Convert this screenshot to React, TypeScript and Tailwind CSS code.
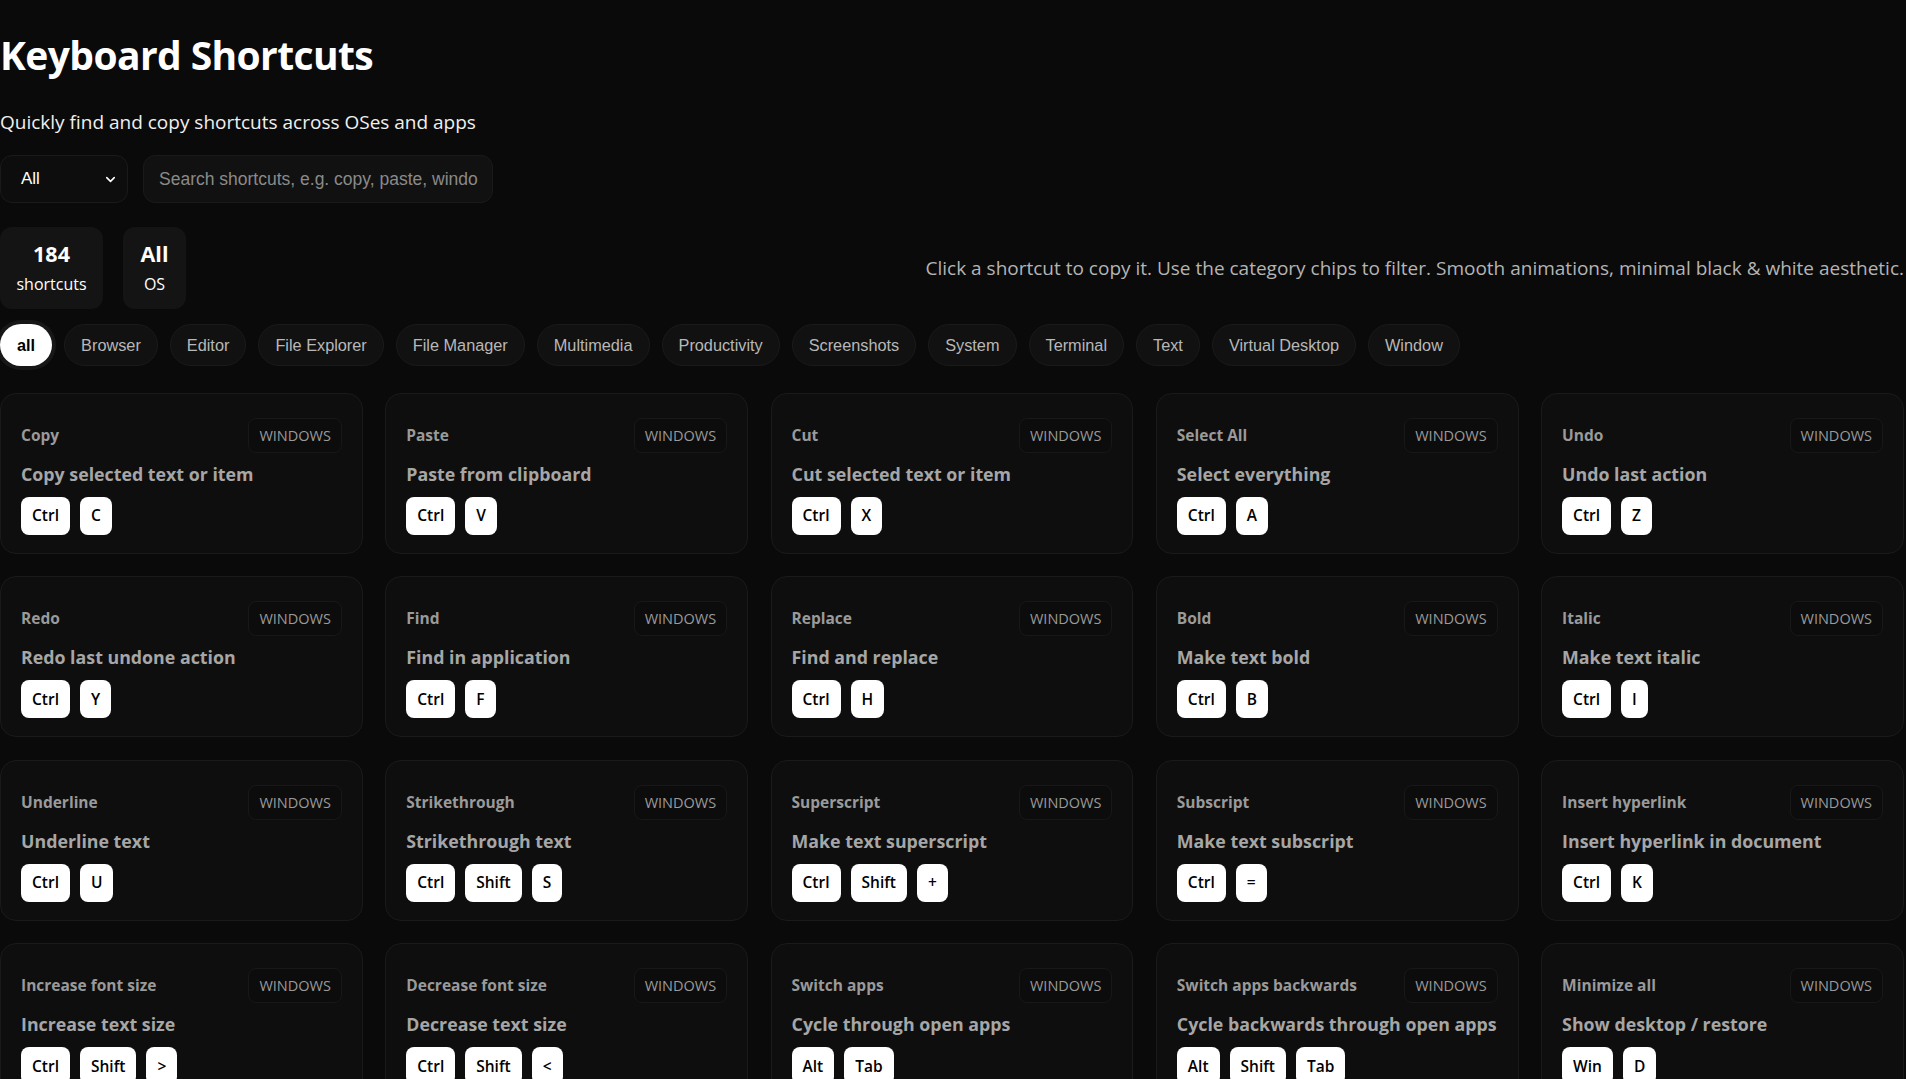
import { ChevronDown } from "lucide-react";

const categories = [
  "Browser",
  "Editor",
  "File Explorer",
  "File Manager",
  "Multimedia",
  "Productivity",
  "Screenshots",
  "System",
  "Terminal",
  "Text",
  "Virtual Desktop",
  "Window",
];

const shortcuts = [
  { title: "Copy", desc: "Copy selected text or item", keys: ["Ctrl", "C"] },
  { title: "Paste", desc: "Paste from clipboard", keys: ["Ctrl", "V"] },
  { title: "Cut", desc: "Cut selected text or item", keys: ["Ctrl", "X"] },
  { title: "Select All", desc: "Select everything", keys: ["Ctrl", "A"] },
  { title: "Undo", desc: "Undo last action", keys: ["Ctrl", "Z"] },
  { title: "Redo", desc: "Redo last undone action", keys: ["Ctrl", "Y"] },
  { title: "Find", desc: "Find in application", keys: ["Ctrl", "F"] },
  { title: "Replace", desc: "Find and replace", keys: ["Ctrl", "H"] },
  { title: "Bold", desc: "Make text bold", keys: ["Ctrl", "B"] },
  { title: "Italic", desc: "Make text italic", keys: ["Ctrl", "I"] },
  { title: "Underline", desc: "Underline text", keys: ["Ctrl", "U"] },
  { title: "Strikethrough", desc: "Strikethrough text", keys: ["Ctrl", "Shift", "S"] },
  { title: "Superscript", desc: "Make text superscript", keys: ["Ctrl", "Shift", "+"] },
  { title: "Subscript", desc: "Make text subscript", keys: ["Ctrl", "="] },
  { title: "Insert hyperlink", desc: "Insert hyperlink in document", keys: ["Ctrl", "K"] },
  { title: "Increase font size", desc: "Increase text size", keys: ["Ctrl", "Shift", ">"] },
  { title: "Decrease font size", desc: "Decrease text size", keys: ["Ctrl", "Shift", "<"] },
  { title: "Switch apps", desc: "Cycle through open apps", keys: ["Alt", "Tab"] },
  { title: "Switch apps backwards", desc: "Cycle backwards through open apps", keys: ["Alt", "Shift", "Tab"] },
  { title: "Minimize all", desc: "Show desktop / restore", keys: ["Win", "D"] },
];

function ShortcutCard({ s }: { s: (typeof shortcuts)[number] }) {
  return (
    <div className="rounded-2xl border border-[#1a1a1a] bg-[#0e0e0e] px-[20px] pt-[24px] pb-[18px]">
      {/* header */}
      <div className="flex items-center justify-between">
        <span className="text-[15.5px] font-bold text-[#9a9a9a]">{s.title}</span>
        <span className="rounded-lg border border-[#181818] bg-[#0c0c0c] px-[10px] py-[6px] text-[14.5px] leading-[21px] text-[#9a9a9a]">
          WINDOWS
        </span>
      </div>
      <div className="mt-[8px] whitespace-nowrap text-[17.8px] font-bold leading-[26px] text-[#a6a6a6]">
        {s.desc}
      </div>
      {/* keys */}
      <div className="mt-[10px] flex gap-[10px]">
        {s.keys.map((k, i) => (
          <kbd
            key={i}
            className="flex h-[38px] items-center rounded-lg bg-white px-[11px] text-[15.5px] font-semibold text-black"
            style={{ fontFamily: "inherit" }}
          >
            {k}
          </kbd>
        ))}
      </div>
    </div>
  );
}

export default function App() {
  return (
    <div
      className="min-h-screen w-full bg-[#0a0a0a] text-white"
      style={{ fontFamily: '"Open Sans", "Noto Sans", sans-serif' }}
    >
      <div className="w-[1904px]">
        {/* Header */}
        <h1 className="pt-[27px] text-[39px] font-bold leading-[56px] tracking-[-0.6px]">Keyboard Shortcuts</h1>
        <p className="mt-[26px] text-[19px] leading-[26px] text-[#f0f0f0]">
          Quickly find and copy shortcuts across OSes and apps
        </p>

        {/* Controls */}
        <div className="mt-[20px] flex gap-[15px] font-['Liberation_Sans',Arial,sans-serif]">
          <div className="flex h-[48px] w-[128px] items-center justify-between rounded-xl border border-[#1a1a1a] bg-[#0d0d0d] pl-[20px] pr-[9px] text-[17px] text-white">
            <span>All</span>
            <ChevronDown size={15} strokeWidth={2.5} />
          </div>
          <div className="flex h-[48px] w-[350px] items-center rounded-xl border border-[#1a1a1a] bg-[#111111] pl-[15px] text-[17.5px] text-[#8a8a8a]">
            Search shortcuts, e.g. copy, paste, windo
          </div>
        </div>

        {/* Stats + hint */}
        <div className="mt-[24px] flex items-center justify-between">
          <div className="flex gap-[20px]">
            <div className="flex h-[82px] w-[103px] flex-col items-center justify-center rounded-xl bg-[#141414]">
              <span className="text-[21.5px] font-bold leading-[31px]">184</span>
              <span className="text-[16px] leading-[30px]">shortcuts</span>
            </div>
            <div className="flex h-[82px] w-[63px] flex-col items-center justify-center rounded-xl bg-[#141414]">
              <span className="text-[21.5px] font-bold leading-[31px]">All</span>
              <span className="text-[16px] leading-[30px]">OS</span>
            </div>
          </div>
          <p className="text-[19px] text-[#b4b4b4]">
            Click a shortcut to copy it. Use the category chips to filter. Smooth animations, minimal black &amp; white aesthetic.
          </p>
        </div>

        {/* Category chips */}
        <div className="mt-[15px] flex items-center gap-[12px] font-['Liberation_Sans',Arial,sans-serif] text-[16.3px]">
          <span className="rounded-full bg-white px-[17px] py-[11px] font-bold leading-[20px] text-black ring-4 ring-[#171717]">
            all
          </span>
          {categories.map((c) => (
            <span
              key={c}
              className="rounded-full border border-[#1a1a1a] bg-[#111111] px-[16px] py-[10px] leading-[20px] text-[#b8b8b8]"
            >
              {c}
            </span>
          ))}
        </div>

        {/* Grid */}
        <div className="mt-[27px] grid grid-cols-5 gap-[22.4px]">
          {shortcuts.map((s) => (
            <ShortcutCard key={s.title} s={s} />
          ))}
        </div>
      </div>
    </div>
  );
}
